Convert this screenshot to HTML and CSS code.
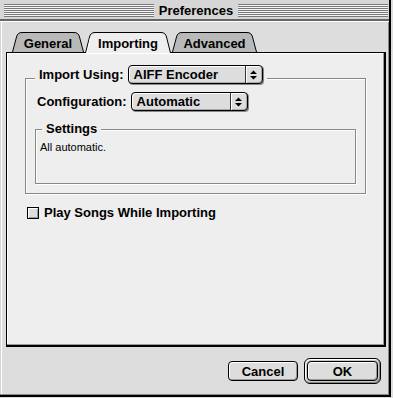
FILE: index.html
```html
<!DOCTYPE html>
<html lang="en">
<head>
	<meta charset="UTF-8">
	<title>Preferences</title>
	<link rel="stylesheet" href="styles.css">
</head>
<body>
	<div class="window">
		<div class="frame">
			<div class="titlebar">
				<div class="stripes"></div>
				<span class="title">Preferences</span>
				<div class="stripes"></div>
			</div>

			<div class="tabs">
				<div class="tab tab-general">
					<svg width="72" height="20" viewBox="0 0 72 20"><path d="M0.5 20 L4.5 5 Q5.5 0.5 10 0.5 H62 Q66.5 0.5 67.5 5 L71.5 20" fill="#b9b9b9" stroke="#000"/></svg>
					<span>General</span>
				</div>
				<div class="tab tab-importing selected">
					<svg width="86" height="21" viewBox="0 0 86 21"><path d="M0.5 21 L4.5 5 Q5.5 0.5 10 0.5 H76 Q80.5 0.5 81.5 5 L85.5 21" fill="#eee" stroke="#000"/><path d="M2 21 L5.5 6" stroke="#fff" fill="none"/></svg>
					<span>Importing</span>
				</div>
				<div class="tab tab-advanced">
					<svg width="85" height="20" viewBox="0 0 85 20"><path d="M0.5 20 L4.5 5 Q5.5 0.5 10 0.5 H75 Q79.5 0.5 80.5 5 L84.5 20" fill="#b9b9b9" stroke="#000"/></svg>
					<span>Advanced</span>
				</div>
			</div>

			<div class="panel">
				<div class="group">
					<div class="group-head">
						<span class="label">Import Using:</span>
						<div class="popup popup-encoder">
							<span class="popup-text">AIFF Encoder</span>
							<span class="popup-arrows"><svg width="7" height="10" viewBox="0 0 7 10"><path d="M0 4 L3.5 0.5 L7 4 Z M0 6 L3.5 9.5 L7 6 Z" fill="#000"/></svg></span>
						</div>
					</div>
					<div class="row">
						<span class="label">Configuration:</span>
						<div class="popup popup-config">
							<span class="popup-text">Automatic</span>
							<span class="popup-arrows"><svg width="7" height="10" viewBox="0 0 7 10"><path d="M0 4 L3.5 0.5 L7 4 Z M0 6 L3.5 9.5 L7 6 Z" fill="#000"/></svg></span>
						</div>
					</div>
					<div class="settings">
						<div class="settings-head">Settings</div>
						<p class="settings-text">All automatic.</p>
					</div>
				</div>

				<div class="check-row">
					<span class="checkbox"></span>
					<span class="label">Play Songs While Importing</span>
				</div>
			</div>

			<div class="buttons">
				<div class="btn">Cancel</div>
				<div class="btn-ring"><div class="btn btn-ok">OK</div></div>
			</div>
		</div>
	</div>
</body>
</html>
```

FILE: styles.css
```css
/* window frame */
body{
  margin: 0;
  background: #fff;
  font-family: "Liberation Sans", Arial, sans-serif;
  color: #000;
}
.window{
  width: 393px;
  height: 398px;
  background: #ddd;
}
.frame{
  box-sizing: border-box;
  width: 391px;
  height: 397px;
  border-right: 2px solid #000;
  border-bottom: 2px solid #000;
  box-shadow: inset -1px -1px 0 #888, inset 1px 0 0 #d4d4d4, inset 2px 0 0 #fff;
  display: flex;
  flex-direction: column;
}

/* title bar */
.titlebar{
  height: 19px;
  border-bottom: 2px solid #666;
  box-shadow: 0 1px 0 #fff;
  background: #d6d6d6;
  display: flex;
  align-items: flex-start;
  padding: 4px 1px 0 4px;
  box-sizing: content-box;
  height: 15px;
}
.stripes{
  flex: 1;
  height: 13px;
  background: repeating-linear-gradient(#7a7a7a 0 1px, #f4f4f4 1px 2px);
}
.title{
  font-size: 13px;
  font-weight: bold;
  line-height: 13px;
  padding: 0 5px;
}

/* tabs */
.tabs{
  display: flex;
  gap: 1px;
  height: 20px;
  margin: 11px 0 0 12px;
}
.tab{
  position: relative;
  height: 20px;
  display: flex;
  align-items: center;
  justify-content: center;
  font-size: 13px;
  font-weight: bold;
  padding-top: 2px;
  box-sizing: border-box;
}
.tab svg{
  position: absolute;
  left: 0;
  top: 0;
}
.tab span{
  position: relative;
}
.tab-general{ width: 72px; }
.tab-importing{ width: 86px; z-index: 1; }
.tab-advanced{ width: 85px; }

/* tab panel */
.panel{
  box-sizing: border-box;
  width: 380px;
  height: 295px;
  margin-left: 6px;
  border: 1px solid #000;
  border-right-width: 2px;
  border-bottom-width: 2px;
  background: #eee;
  box-shadow: inset -1px -1px 0 #999, inset 1px 1px 0 #fff;
  padding: 25px 0 0 18px;
}
.label{
  font-size: 13px;
  font-weight: bold;
  white-space: nowrap;
}
.group{
  box-sizing: border-box;
  width: 341px;
  border: 1px solid #888;
  box-shadow: 1px 1px 0 #fff, inset 1px 1px 0 #fff;
  padding: 0 9px 9px;
  display: flex;
  flex-direction: column;
}
.group-head{
  align-self: flex-start;
  display: flex;
  align-items: flex-start;
  gap: 4px;
  height: 20px;
  margin-top: -14px;
  padding: 0 4px;
  background: #eee;
}
.group-head .label,
.row .label{
  line-height: 19px;
}
.row{
  display: flex;
  align-items: flex-start;
  gap: 4px;
  height: 20px;
  margin: 7px 0 0 2px;
}

/* popup menus */
.popup{
  box-sizing: border-box;
  height: 19px;
  display: flex;
  border: 1px solid #000;
  border-radius: 4px;
  background: #ddd;
  box-shadow: 1px 1px 0 #888, inset 1px 1px 0 #fff, inset -1px -1px 0 #aaa;
  font-size: 13px;
  font-weight: bold;
}
.popup-encoder{ width: 135px; }
.popup-config{ width: 117px; }
.popup-text{
  flex: 1;
  padding-left: 5px;
  line-height: 17px;
}
.popup-arrows{
  width: 16px;
  border-left: 1px solid #333;
  box-shadow: inset 1px 0 0 #fff;
  display: flex;
  align-items: center;
  justify-content: center;
}

/* settings box */
.settings{
  box-sizing: border-box;
  height: 55px;
  margin-top: 17px;
  border: 1px solid #888;
  box-shadow: 1px 1px 0 #fff, inset 1px 1px 0 #fff;
  display: flex;
  flex-direction: column;
}
.settings-head{
  align-self: flex-start;
  margin: -9px 0 0 6px;
  padding: 0 4px;
  background: #eee;
  font-size: 13px;
  font-weight: bold;
  line-height: 15px;
}
.settings-text{
  margin: 5px 0 0 4px;
  font-size: 11px;
  line-height: 13px;
}

/* checkbox */
.check-row{
  display: flex;
  align-items: center;
  gap: 5px;
  height: 15px;
  margin: 11px 0 0 2px;
}
.checkbox{
  box-sizing: border-box;
  width: 12px;
  height: 12px;
  border: 1px solid #000;
  background: #ddd;
  box-shadow: inset 1px 1px 0 #fff, inset -1px -1px 0 #999;
}

/* buttons */
.buttons{
  display: flex;
  justify-content: flex-end;
  align-items: center;
  gap: 6px;
  margin-top: 11px;
  padding-right: 8px;
}
.btn{
  box-sizing: border-box;
  width: 70px;
  height: 20px;
  border: 1px solid #000;
  border-radius: 4px;
  background: #ddd;
  box-shadow: inset 1px 1px 0 #fff, inset -1px -1px 0 #999;
  display: flex;
  align-items: center;
  justify-content: center;
  font-size: 13px;
  font-weight: bold;
}
.btn-ring{
  border: 1px solid #000;
  border-radius: 6px;
  padding: 2px;
  background: #c8c8c8;
  box-shadow: inset 1px 1px 0 #fff, inset -1px -1px 0 #888;
}
.btn-ok{ width: 71px; }
```
